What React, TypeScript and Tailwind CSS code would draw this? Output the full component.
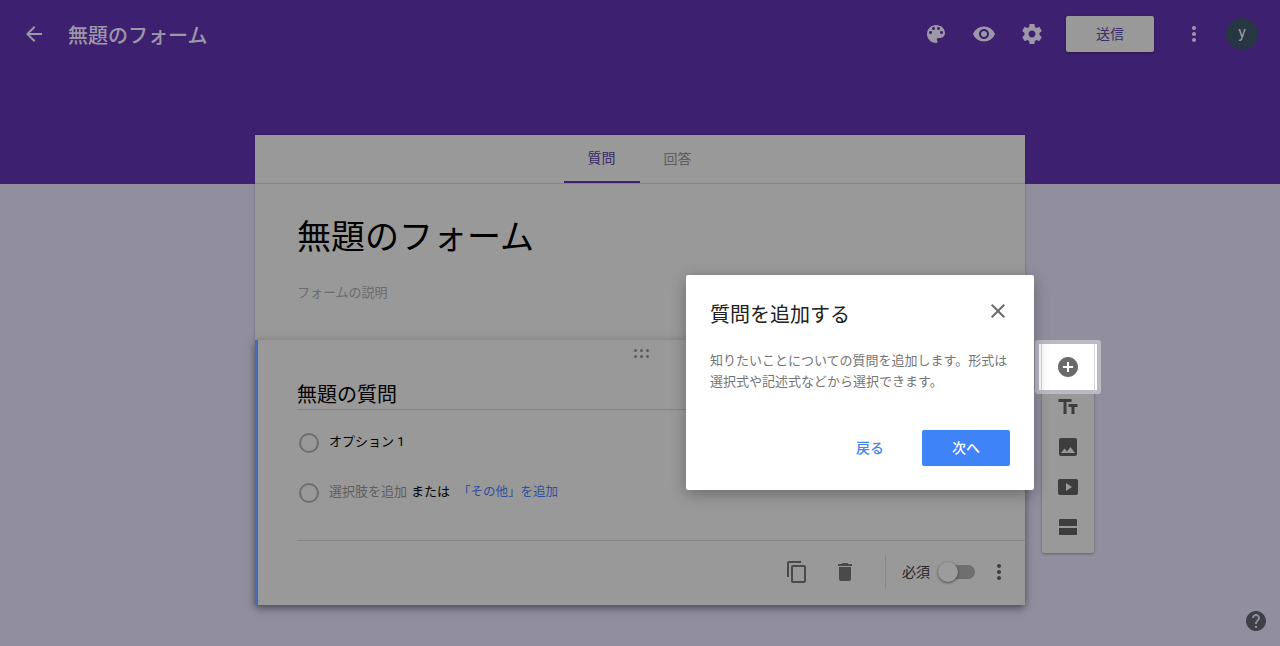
import type { ReactNode } from "react";

const FONT = "font-['Roboto','Noto_Sans_CJK_JP',sans-serif]";

const ICONS: Record<string, ReactNode> = {
  back: <path d="M20 11H7.83l5.59-5.59L12 4l-8 8 8 8 1.41-1.41L7.83 13H20v-2z" />,
  palette: <path d="M12 3c-4.97 0-9 4.03-9 9s4.03 9 9 9c.83 0 1.5-.67 1.5-1.5 0-.39-.15-.74-.39-1.01-.23-.26-.38-.61-.38-.99 0-.83.67-1.5 1.5-1.5H16c2.76 0 5-2.24 5-5 0-4.42-4.03-8-9-8zm-5.5 9c-.83 0-1.5-.67-1.5-1.5S5.67 9 6.5 9 8 9.67 8 10.5 7.33 12 6.5 12zm3-4C8.67 8 8 7.33 8 6.5S8.67 5 9.5 5s1.5.67 1.5 1.5S10.33 8 9.5 8zm5 0c-.83 0-1.5-.67-1.5-1.5S13.67 5 14.5 5s1.5.67 1.5 1.5S15.33 8 14.5 8zm3 4c-.83 0-1.5-.67-1.5-1.5S16.67 9 17.5 9s1.5.67 1.5 1.5-.67 1.5-1.5 1.5z" />,
  eye: <path d="M12 4.5C7 4.5 2.73 7.61 1 12c1.73 4.39 6 7.5 11 7.5s9.27-3.11 11-7.5c-1.73-4.39-6-7.5-11-7.5zM12 17c-2.76 0-5-2.24-5-5s2.24-5 5-5 5 2.24 5 5-2.24 5-5 5zm0-8c-1.66 0-3 1.34-3 3s1.34 3 3 3 3-1.34 3-3-1.34-3-3-3z" />,
  gear: <path d="M19.43 12.98c.04-.32.07-.64.07-.98s-.03-.66-.07-.98l2.11-1.65c.19-.15.24-.42.12-.64l-2-3.46c-.12-.22-.39-.3-.61-.22l-2.49 1c-.52-.4-1.08-.73-1.69-.98l-.38-2.65C14.46 2.18 14.25 2 14 2h-4c-.25 0-.46.18-.49.42l-.38 2.65c-.61.25-1.17.59-1.69.98l-2.49-1c-.23-.09-.49 0-.61.22l-2 3.46c-.13.22-.07.49.12.64l2.11 1.65c-.04.32-.07.65-.07.98s.03.66.07.98l-2.11 1.65c-.19.15-.24.42-.12.64l2 3.46c.12.22.39.3.61.22l2.49-1c.52.4 1.08.73 1.69.98l.38 2.65c.03.24.24.42.49.42h4c.25 0 .46-.18.49-.42l.38-2.65c.61-.25 1.17-.59 1.69-.98l2.49 1c.23.09.49 0 .61-.22l2-3.46c.12-.22.07-.49-.12-.64l-2.11-1.65zM12 15.5c-1.93 0-3.5-1.57-3.5-3.5s1.57-3.5 3.5-3.5 3.5 1.57 3.5 3.5-1.57 3.5-3.5 3.5z" />,
  more: <path d="M12 8c1.1 0 2-.9 2-2s-.9-2-2-2-2 .9-2 2 .9 2 2 2zm0 2c-1.1 0-2 .9-2 2s.9 2 2 2 2-.9 2-2-.9-2-2-2zm0 6c-1.1 0-2 .9-2 2s.9 2 2 2 2-.9 2-2-.9-2-2-2z" />,
  add: <path d="M12 2C6.48 2 2 6.48 2 12s4.48 10 10 10 10-4.48 10-10S17.52 2 12 2zm5 11h-4v4h-2v-4H7v-2h4V7h2v4h4v2z" />,
  text: <path d="M2.5 4v3h5v12h3V7h5V4h-13zm19 5h-9v3h3v7h3v-7h3V9z" />,
  image: <path d="M21 19V5c0-1.1-.9-2-2-2H5c-1.1 0-2 .9-2 2v14c0 1.1.9 2 2 2h14c1.1 0 2-.9 2-2zM8.5 13.5l2.5 3.01L14.5 12l4.5 6H5l3.5-4.5z" />,
  video: <path d="M20 4H4c-1.1 0-2 .9-2 2v12c0 1.1.9 2 2 2h16c1.1 0 2-.9 2-2V6c0-1.1-.9-2-2-2zM10 16V8l6 4-6 4z" />,
  section: <path d="M3 5c0-.55.45-1 1-1h16c.55 0 1 .45 1 1v6H3V5zm0 8h18v6c0 .55-.45 1-1 1H4c-.55 0-1-.45-1-1v-6z" />,
  copy: <path d="M16 1H4c-1.1 0-2 .9-2 2v14h2V3h12V1zm3 4H8c-1.1 0-2 .9-2 2v14c0 1.1.9 2 2 2h11c1.1 0 2-.9 2-2V7c0-1.1-.9-2-2-2zm0 16H8V7h11v14z" />,
  trash: <path d="M6 19c0 1.1.9 2 2 2h8c1.1 0 2-.9 2-2V7H6v12zM19 4h-3.5l-1-1h-5l-1 1H5v2h14V4z" />,
  close: <path d="M19 6.41L17.59 5 12 10.59 6.41 5 5 6.41 10.59 12 5 17.59 6.41 19 12 13.41 17.59 19 19 17.59 13.41 12 19 6.41z" />,
  help: <path d="M12 2C6.48 2 2 6.48 2 12s4.48 10 10 10 10-4.48 10-10S17.52 2 12 2zm1 17h-2v-2h2v2zm2.07-7.75l-.9.92C13.45 12.9 13 13.5 13 15h-2v-.5c0-1.1.45-2.1 1.17-2.83l1.24-1.26c.37-.36.59-.86.59-1.41 0-1.1-.9-2-2-2s-2 .9-2 2H8c0-2.21 1.79-4 4-4s4 1.79 4 4c0 .88-.36 1.68-.93 2.25z" />,
};

function Icon({ name, className }: { name: string; className: string }) {
  return (
    <svg viewBox="0 0 24 24" fill="currentColor" className={`shrink-0 ${className}`}>
      {ICONS[name]}
    </svg>
  );
}

function Radio() {
  return <span className="h-5 w-5 shrink-0 rounded-full border-2 border-[#6f6f6f]" />;
}

function DragDots() {
  return (
    <div className="grid w-[16px] grid-cols-3 gap-x-[3px] gap-y-[3px]">
      {[0, 1, 2, 3, 4, 5].map((i) => (
        <span key={i} className="h-[3px] w-[3px] rounded-full bg-[#5c5c5c]" />
      ))}
    </div>
  );
}

function Toolbar() {
  return (
    <div className="relative ml-[17px] mt-[7px] flex h-[206px] w-[52px] flex-col items-center rounded-b-[2px] bg-[#999999] shadow-[0_1px_3px_rgba(0,0,0,0.35)]">
      <div className="absolute left-[-7px] top-[-7px] flex h-[54px] w-[66px] items-center justify-center rounded-[3px] border-4 border-[#bcbbc3] bg-white">
        <div className="flex h-full w-[54px] items-center justify-center border-x border-[#d5d4dc]">
          <Icon name="add" className="h-6 w-6 text-[#6a6a6a]" />
        </div>
      </div>
      {["", "text", "image", "video", "section"].map((name, i) => (
        <div key={i} className="flex h-10 w-full items-center justify-center">
          {name && <Icon name={name} className="h-6 w-6 text-[#3d3d3d]" />}
        </div>
      ))}
    </div>
  );
}

function QuestionCard() {
  return (
    <div className="flex h-[265px] w-[770px] flex-col border-l-[3px] border-[#4469b5] bg-[#999999] shadow-[0_3px_8px_rgba(0,0,0,0.5)]">
      <div className="flex justify-center pt-[9px]">
        <DragDots />
      </div>
      <div className="ml-[39px] mt-[13px] h-[39px] border-b border-[#858585] pt-[10px] text-[20px] leading-[28px] text-black">
        無題の質問
      </div>
      <div className="ml-[41px] mt-[22px] flex items-center gap-[10px] text-[13px] leading-[20px] text-black">
        <Radio />
        <span className="pb-[2px]">オプション 1</span>
      </div>
      <div className="ml-[41px] mt-[28px] flex items-center gap-[10px] text-[13px] leading-[20px]">
        <Radio />
        <span className="pb-[2px] text-[#5e5e5e]">選択肢を追加</span>
        <span className="-ml-[6px] pb-[2px] text-black">または</span>
        <span className="-ml-[2px] pb-[2px] text-[12.5px] text-[#2f4f9e]">「その他」を追加</span>
      </div>
      <div className="ml-[39px] mt-[36px] flex flex-1 items-center border-t border-[#858585] pb-[2px] pl-[488px]">
        <Icon name="copy" className="h-6 w-6 text-[#4a4a4a]" />
        <Icon name="trash" className="ml-6 h-6 w-6 text-[#4a4a4a]" />
        <span className="ml-[28px] h-[32px] w-px bg-[#858585]" />
        <span className="ml-4 text-[14px] text-[#262626]">必須</span>
        <div className="relative ml-[8px] h-[14px] w-[37px] rounded-full bg-[#6f6f6f]">
          <span className="absolute left-0 top-[-3px] h-5 w-5 rounded-full bg-[#9c9c9c] shadow-[0_1px_3px_rgba(0,0,0,0.5)]" />
        </div>
        <Icon name="more" className="ml-[12px] h-6 w-6 text-[#3d3d3d]" />
      </div>
    </div>
  );
}

function Dialog() {
  return (
    <div className="absolute left-[686px] top-[275px] flex h-[215px] w-[348px] flex-col rounded-[2px] bg-white px-6 shadow-[0_4px_16px_rgba(0,0,0,0.3)]">
      <div className="flex items-start justify-between pt-[25px]">
        <h2 className="pt-px text-[20px] leading-[28px] text-[#212121]">質問を追加する</h2>
        <Icon name="close" className="-mt-px h-6 w-6 text-[#6b6b6b]" />
      </div>
      <p className="mt-[21px] text-[13px] leading-[21px] text-[#757575]">
        知りたいことについての質問を追加します。形式は
        <br />
        選択式や記述式などから選択できます。
      </p>
      <div className="mt-auto flex items-center justify-end pb-6">
        <span className="mr-[38px] text-[14px] font-medium text-[#4285f4]">戻る</span>
        <span className="flex h-9 w-[88px] items-center justify-center rounded-[2px] bg-[#3f83f8] text-[14px] font-medium text-white">
          次へ
        </span>
      </div>
    </div>
  );
}

export default function App() {
  return (
    <div className={`relative h-[646px] w-[1280px] overflow-hidden bg-[#918f9e] ${FONT}`}>
      <header className="h-[184px] bg-[#3e2071]">
        <div className="flex h-[68px] items-center pl-[22px] text-[#9c98a8]">
          <Icon name="back" className="h-6 w-6" />
          <span className="ml-[22px] pt-[3px] text-[20px] font-medium">無題のフォーム</span>
          <Icon name="palette" className="ml-auto h-6 w-6" />
          <Icon name="eye" className="ml-6 h-6 w-6" />
          <Icon name="gear" className="ml-6 h-6 w-6" />
          <span className="ml-[22px] flex h-9 w-[88px] items-center justify-center rounded-[2px] bg-[#999999] text-[14px] text-[#3a2c66] shadow-[0_1px_3px_rgba(0,0,0,0.4)]">
            送信
          </span>
          <Icon name="more" className="ml-[28px] h-6 w-6" />
          <span className="ml-[20px] mr-[22px] flex h-8 w-8 items-center justify-center rounded-full bg-[#263642] pb-[3px] text-[16px] text-[#9c9c9c]">
            y
          </span>
        </div>
      </header>

      <main className="-mt-[49px] ml-[255px]">
        <section className="h-[205px] w-[770px] bg-[#999999] shadow-[0_1px_3px_rgba(0,0,0,0.25)]">
          <div className="flex h-[49px] justify-center border-b border-[#858585] text-[14px]">
            <span className="ml-[-1px] flex h-[48px] w-[76px] items-center justify-center border-b-2 border-[#3e2071] text-[#3a2c66]">
              質問
            </span>
            <span className="flex h-[48px] w-[76px] items-center justify-center text-[#5e5e5e]">回答</span>
          </div>
          <h1 className="ml-[42px] mt-[28px] text-[34px] leading-[50px] text-black">無題のフォーム</h1>
          <p className="ml-[42px] mt-[21px] text-[13px] leading-[20px] text-[#6b6b6b]">フォームの説明</p>
        </section>
        <div className="flex items-start">
          <QuestionCard />
          <Toolbar />
        </div>
      </main>

      <Dialog />
      <Icon name="help" className="absolute bottom-[13px] right-[12px] h-6 w-6 text-[#3f3f46]" />
    </div>
  );
}
